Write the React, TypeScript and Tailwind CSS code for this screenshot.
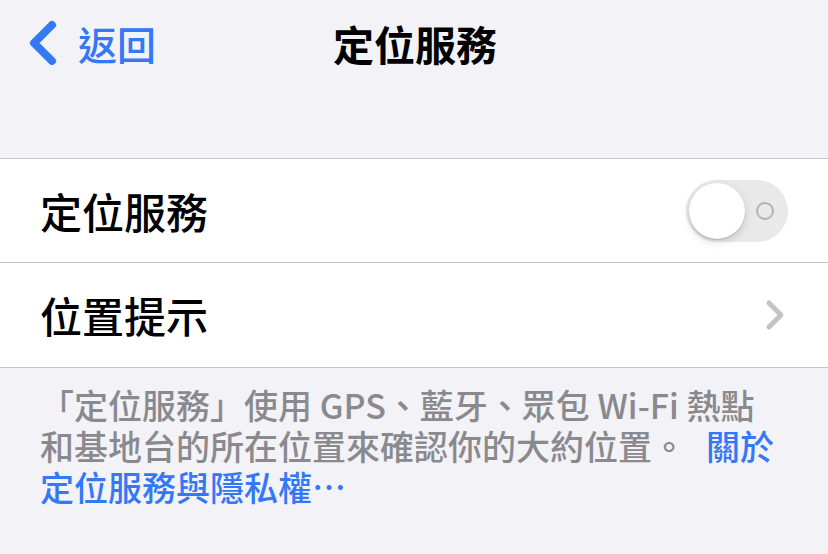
import React from "react";

export default function App() {
  const font = { fontFamily: '"Noto Sans CJK TC", "Noto Sans", sans-serif' };
  return (
    <div className="w-[828px] h-[554px] bg-[#f2f2f7] overflow-hidden" style={font}>
      {/* Nav bar */}
      <div className="relative h-[86px] flex items-center">
        <div className="flex items-center pl-[26px] text-[#3478f6]">
          <svg width="32" height="46" viewBox="0 0 32 46" className="block">
            <path d="M26 5 L8 23 L26 41" fill="none" stroke="#3478f6" strokeWidth="8" strokeLinecap="round" strokeLinejoin="round" />
          </svg>
          <span className="ml-[20px] text-[39px] leading-none font-medium">返回</span>
        </div>
        <div className="absolute left-0 right-0 top-0 h-[86px] flex items-center justify-center pointer-events-none">
          <span className="text-[41px] leading-none font-bold text-black pl-[2px]">定位服務</span>
        </div>
      </div>
      <div className="h-[72px]" />
      {/* Group */}
      <div className="bg-white border-t border-b border-[#c6c6c8]">
        <div className="h-[104px] flex items-center pl-[40px] pr-[40px] border-b border-[#c6c6c8]">
          <span className="text-[42px] leading-none font-medium text-black flex-1">定位服務</span>
          <div className="relative w-[102px] h-[62px] rounded-full bg-[#e9e9ea]">
            <div className="absolute left-[3px] top-[3px] w-[56px] h-[56px] rounded-full bg-white shadow-[0_3px_8px_rgba(0,0,0,0.15),0_1px_1px_rgba(0,0,0,0.16)]" />
            <div className="absolute left-[70px] top-[22px] w-[18px] h-[18px] rounded-full border-[2px] border-[#b3b3b3]" />
          </div>
        </div>
        <div className="h-[104px] flex items-center pl-[40px] pr-[42px]">
          <span className="text-[42px] leading-none font-medium text-black flex-1">位置提示</span>
          <svg width="22" height="32" viewBox="0 0 22 32" className="block">
            <path d="M5 4 L17 16 L5 28" fill="none" stroke="#c4c4c7" strokeWidth="5" strokeLinecap="round" strokeLinejoin="round" />
          </svg>
        </div>
      </div>
      {/* Footer */}
      <div className="pl-[40px] pr-[30px] pt-[16px] text-[34px] leading-[41px] font-medium text-[#8a8a8e] whitespace-nowrap">
        <div>「定位服務」使用 GPS、藍牙、眾包 Wi-Fi 熱點</div>
        <div>
          和基地台的所在位置來確認你的大約位置。<span className="text-[#3478f6] ml-[20px]">關於</span>
        </div>
        <div className="text-[#3478f6]">定位服務與隱私權⋯</div>
      </div>
    </div>
  );
}
